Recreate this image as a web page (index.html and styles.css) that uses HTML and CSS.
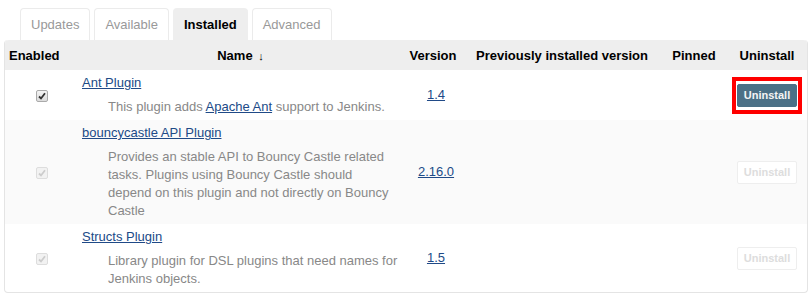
FILE: index.html
```html
<!DOCTYPE html>
<html lang="en">
<head>
  <meta charset="UTF-8" />
  <title>Plugin Manager - Installed</title>
  <link rel="stylesheet" href="styles.css">
</head>
<body>
  <div class="tabs">
    <a class="tab">Updates</a>
    <a class="tab">Available</a>
    <a class="tab active">Installed</a>
    <a class="tab">Advanced</a>
  </div>

  <table class="plugins">
    <colgroup>
      <col class="c-enabled">
      <col class="c-name">
      <col class="c-version">
      <col class="c-prev">
      <col class="c-pinned">
      <col class="c-uninstall">
    </colgroup>
    <thead>
      <tr>
        <th class="left">Enabled</th>
        <th>Name <span class="arrow">↓</span></th>
        <th>Version</th>
        <th>Previously installed version</th>
        <th>Pinned</th>
        <th>Uninstall</th>
      </tr>
    </thead>
    <tbody>
      <tr>
        <td class="center">
          <span class="check">
            <svg width="8" height="8" viewBox="0 0 8 8"><path d="M1 4.5 L3 6.5 L7 1.2" fill="none" stroke="#333" stroke-width="1.8"/></svg>
          </span>
        </td>
        <td class="name">
          <a href="#" class="plugin-name">Ant Plugin</a>
          <div class="desc">This plugin adds <a href="#">Apache Ant</a> support to Jenkins.</div>
        </td>
        <td class="version"><a href="#">1.4</a></td>
        <td></td>
        <td></td>
        <td class="center"><span class="highlight"><button class="uninstall">Uninstall</button></span></td>
      </tr>
      <tr class="alt">
        <td class="center">
          <span class="check disabled">
            <svg width="8" height="8" viewBox="0 0 8 8"><path d="M1 4.5 L3 6.5 L7 1.2" fill="none" stroke="#ccc" stroke-width="1.8"/></svg>
          </span>
        </td>
        <td class="name">
          <a href="#" class="plugin-name">bouncycastle API Plugin</a>
          <div class="desc">Provides an stable API to Bouncy Castle related tasks. Plugins using Bouncy Castle should depend on this plugin and not directly on Bouncy Castle</div>
        </td>
        <td class="version"><a href="#">2.16.0</a></td>
        <td></td>
        <td></td>
        <td class="center"><button class="uninstall" disabled>Uninstall</button></td>
      </tr>
      <tr>
        <td class="center">
          <span class="check disabled">
            <svg width="8" height="8" viewBox="0 0 8 8"><path d="M1 4.5 L3 6.5 L7 1.2" fill="none" stroke="#ccc" stroke-width="1.8"/></svg>
          </span>
        </td>
        <td class="name">
          <a href="#" class="plugin-name">Structs Plugin</a>
          <div class="desc">Library plugin for DSL plugins that need names for Jenkins objects.</div>
        </td>
        <td class="version"><a href="#">1.5</a></td>
        <td></td>
        <td></td>
        <td class="center"><button class="uninstall" disabled>Uninstall</button></td>
      </tr>
    </tbody>
  </table>
</body>
</html>
```

FILE: styles.css
```css
* {
  box-sizing: border-box;
}

body {
  margin: 0;
  padding: 8px 4px 0;
  font-family: "Liberation Sans", Arial, sans-serif;
  font-size: 13px;
  color: #333;
  background: #fff;
}

a {
  color: #204a87;
}

.tabs {
  display: flex;
  gap: 4px;
  margin-left: 16px;
}

.tab {
  display: block;
  height: 32px;
  line-height: 31px;
  padding: 0 10px;
  border: 1px solid #ebebeb;
  border-bottom: none;
  border-radius: 4px 4px 0 0;
  color: #999;
  text-decoration: none;
}

.tab.active {
  background: #eee;
  border-color: #eee;
  color: #000;
  font-weight: bold;
}

.plugins {
  width: 802px;
  table-layout: fixed;
  border-collapse: separate;
  border-spacing: 0;
  border: 1px solid #e4e4e4;
  border-top: none;
  border-radius: 4px;
}

.c-enabled { width: 73px; }
.c-name { width: 325px; }
.c-version { width: 60px; }
.c-prev { width: 198px; }
.c-pinned { width: 66px; }
.c-uninstall { width: 80px; }

.plugins th {
  height: 30px;
  background: #eee;
  color: #000;
  font-weight: bold;
  text-align: center;
  padding: 0 4px;
  white-space: nowrap;
}

.plugins th:first-child {
  border-top-left-radius: 4px;
}

.plugins th:last-child {
  border-top-right-radius: 4px;
}

.plugins th.left {
  text-align: left;
  padding-left: 4px;
}

.arrow {
  font-size: 11px;
  margin-left: 2px;
}

.plugins td {
  padding: 4px 4px;
  vertical-align: middle;
  line-height: 18px;
}

.plugins td.name {
  padding-right: 0;
}

.plugins tr.alt td {
  background: #fafafa;
}

.center {
  text-align: center;
}

.plugin-name {
  display: block;
}

.desc {
  margin-top: 6px;
  padding-left: 26px;
  padding-right: 4px;
  color: #888;
}

.desc a {
  color: #204a87;
}

.version {
  text-align: center;
  padding-left: 10px !important;
}

.uninstall {
  font-family: "Liberation Sans", Arial, sans-serif;
  font-size: 11px;
  font-weight: bold;
  height: 23px;
  padding: 0 6px;
  border: 1px solid #4b7086;
  border-radius: 2px;
  background: #4b7086;
  color: #f4f4f4;
}

.uninstall:disabled {
  background: #fff;
  border-color: #eee;
  color: #ddd;
}

.highlight {
  display: inline-block;
  border: 4px solid #f00;
  padding: 3px 1px;
  line-height: 0;
}

.check {
  display: inline-flex;
  align-items: center;
  justify-content: center;
  width: 12px;
  height: 12px;
  border: 1px solid #aaa;
  border-radius: 2px;
  background: linear-gradient(#f4f4f4, #dcdcdc);
  vertical-align: middle;
}

.check.disabled {
  border-color: #ddd;
  background: #f2f2f2;
}
```
